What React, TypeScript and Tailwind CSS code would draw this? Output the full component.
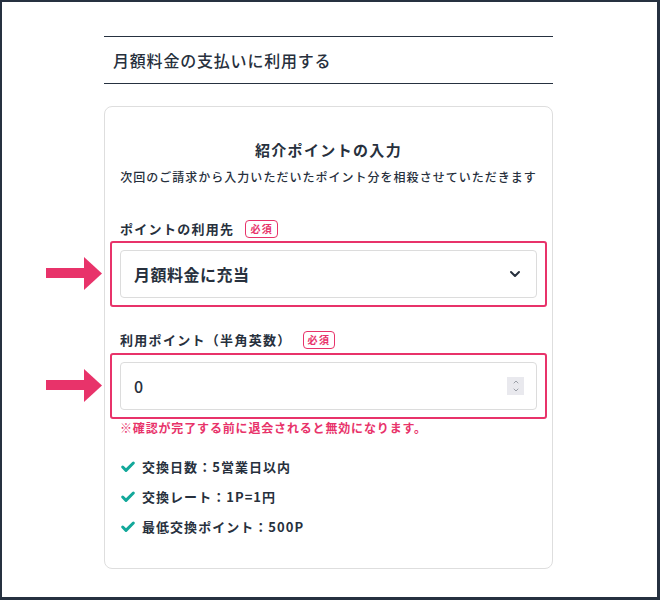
import { Check, ChevronDown, ChevronUp } from 'lucide-react';

const font = { fontFamily: '"Noto Sans CJK JP", "Noto Sans", sans-serif' };

function Arrow() {
  return (
    <svg className="absolute left-[-66px] top-1/2 -translate-y-1/2" width="56" height="34" viewBox="0 0 56 34">
      <rect x="0" y="11" width="40" height="10" fill="#e8336a" />
      <polygon points="38,0 56,16.5 38,33" fill="#e8336a" />
    </svg>
  );
}

function Required() {
  return (
    <span className="ml-[11px] inline-flex h-[18px] items-center rounded-[4px] border border-[#e8336a] px-[4px] text-[10px] font-bold leading-none text-[#e8336a]">
      必須
    </span>
  );
}

const notes = ['交換日数：5営業日以内', '交換レート：1P=1円', '最低交換ポイント：500P'];

export default function App() {
  return (
    <div style={font} className="h-[600px] w-[660px] border-b-[3px] border-l-2 border-r-[3px] border-t-2 border-[#263140] bg-white text-[#27303d]">
      <div className="ml-[102px] w-[449px] pt-[34px]">
        <div className="flex h-[48px] items-center border-y border-[#263140] pl-[9px] text-[16px] font-medium tracking-[0.05em]">
          月額料金の支払いに利用する
        </div>

        <div className="mt-[22px] rounded-lg border border-[#dedede] px-[15px] pb-[31px] pt-[32px]">
          <h2 className="text-center text-[15px] font-bold leading-[22px] tracking-[0.09em]">紹介ポイントの入力</h2>
          <p className="mt-[7px] whitespace-nowrap text-center text-[12px] font-medium leading-[18px] tracking-[0.085em]">
            次回のご請求から入力いただいたポイント分を相殺させていただきます
          </p>

          <div className="mt-[33px] flex h-[20px] items-center text-[13px] font-bold tracking-[0.1em]">
            ポイントの利用先
            <Required />
          </div>
          <div className="relative mx-[-10px] mt-[2px] rounded-[3px] border-2 border-[#e8336a] px-[8px] py-[7px]">
            <Arrow />
            <div className="flex h-[48px] items-center justify-between rounded-[4px] border border-[#dcdcdc] pl-[13px] pr-[13px]">
              <span className="text-[16px] font-bold tracking-[0.03em]">月額料金に充当</span>
              <ChevronDown className="h-[16px] w-[16px]" strokeWidth={3} />
            </div>
          </div>

          <div className="mt-[23px] flex h-[20px] items-center text-[13px] font-bold tracking-[0.1em]">
            利用ポイント（半角英数）
            <Required />
          </div>
          <div className="relative mx-[-10px] mt-[3px] rounded-[3px] border-2 border-[#e8336a] px-[8px] py-[7px]">
            <Arrow />
            <div className="flex h-[48px] items-center justify-between rounded-[4px] border border-[#dcdcdc] pl-[13px] pr-[12px]">
              <span className="text-[16px] font-medium">0</span>
              <span className="flex h-[18px] w-[17px] flex-col items-center justify-center bg-[#e9e9ee] text-[#8a8f99]">
                <ChevronUp className="h-[8px] w-[8px]" strokeWidth={2.5} />
                <ChevronDown className="h-[8px] w-[8px]" strokeWidth={2.5} />
              </span>
            </div>
          </div>
          <p className="mt-[0px] text-[12px] font-bold leading-[18px] tracking-[0.07em] text-[#e8336a]">
            ※確認が完了する前に退会されると無効になります。
          </p>

          <ul className="mt-[20px] flex flex-col gap-[10px]">
            {notes.map((n) => (
              <li key={n} className="flex h-[20px] items-center gap-[6px] text-[13px] font-semibold tracking-[0.08em]">
                <Check className="h-[16px] w-[16px] text-[#13a89a]" strokeWidth={4.5} />
                {n}
              </li>
            ))}
          </ul>
        </div>
      </div>
    </div>
  );
}
